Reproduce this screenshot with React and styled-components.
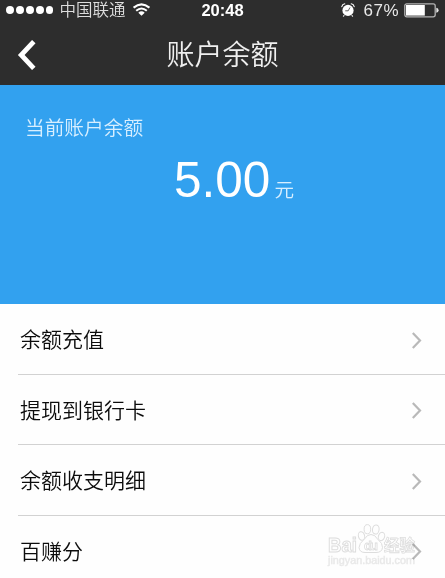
import React from "react";
import styled, { createGlobalStyle } from "styled-components";

const GlobalStyle = createGlobalStyle`
  * {
    box-sizing: border-box;
  }
  body {
    margin: 0;
    background: #fff;
    overflow: hidden;
    font-family: "Liberation Sans", "Noto Sans CJK SC", sans-serif;
  }
`;

const Screen = styled.main`
  position: relative;
  width: 445px;
  height: 578px;
  overflow: hidden;
  background: #fefefe;
`;

const Header = styled.header`
  height: 85px;
  background: #2d2d2d;
  color: #fff;
`;

const StatusBar = styled.div`
  display: grid;
  grid-template-columns: 1fr auto 1fr;
  align-items: center;
  height: 20px;
  padding: 0 6px;
`;

const StatusGroup = styled.div`
  display: flex;
  align-items: center;
  justify-content: ${(props) => props.$align || "flex-start"};
  height: 20px;
`;

const Signal = styled.div`
  display: flex;
  gap: 2px;
  margin-right: 6px;
`;

const Dot = styled.i`
  width: 7.9px;
  height: 7.9px;
  border-radius: 50%;
  background: #fff;
`;

const Carrier = styled.span`
  margin-right: 8px;
  font-size: 16.5px;
  font-weight: 350;
  line-height: 20px;
  color: #dedede;
`;

const Clock = styled.span`
  font-size: 16.5px;
  font-weight: 700;
  line-height: 20px;
`;

const Percent = styled.span`
  margin: 0 5px 0 8px;
  padding-top: 1px;
  font-size: 17px;
  line-height: 20px;
  letter-spacing: 0.5px;
  color: #e8e8e8;
`;

const TitleBar = styled.div`
  display: grid;
  grid-template-columns: 54px 1fr 54px;
  align-items: center;
  height: 65px;
`;

const BackButton = styled.button`
  display: flex;
  padding: 4px 0 0 17px;
  border: 0;
  background: none;
  color: #fff;
`;

const Title = styled.h1`
  margin: 0;
  padding-top: 7px;
  font-size: 28px;
  font-weight: 350;
  line-height: 40px;
  text-align: center;
  color: #efefef;
`;

const Balance = styled.section`
  height: 219px;
  padding: 29px 25px;
  background: #32a1ef;
  color: #fff;
`;

const BalanceLabel = styled.div`
  font-size: 19.7px;
  font-weight: 350;
  line-height: 28px;
  color: #d8efff;
`;

const Amount = styled.div`
  display: flex;
  align-items: baseline;
  justify-content: center;
  margin-top: 7px;
  padding-left: 23px;
  font-size: 49.5px;
  line-height: 62px;
`;

const Unit = styled.span`
  margin-left: 4px;
  font-size: 19.6px;
  font-weight: 350;
  line-height: 20px;
  color: #d8efff;
`;

const Menu = styled.ul`
  margin: 0;
  padding: 0 0 0 18px;
  list-style: none;
`;

const MenuItem = styled.li`
  display: flex;
  align-items: center;
  justify-content: space-between;
  height: 70.5px;
  padding: 3px 23.5px 0 2px;
  border-bottom: 1px solid #d2d2d2;
  font-size: 21px;
  font-weight: 350;
  line-height: 30px;
  color: #0c0c0c;
`;

// Multiplied so the row's chevron stays visible through it
const Watermark = styled.div`
  position: absolute;
  left: 326px;
  top: 523px;
  mix-blend-mode: multiply;
`;

const WifiIcon = () => (
  <svg width="17" height="14" viewBox="0 0 17 14" fill="none" stroke="#fff" strokeWidth="2.1">
    <path d="M.6 4.6Q8.5-2 16.4 4.6" />
    <path d="M3.2 7.8Q8.5 3.2 13.8 7.8" />
    <path d="M5.3 9.7Q8.5 7 11.7 9.7L8.5 12.8Z" fill="#fff" stroke="none" />
  </svg>
);

const AlarmIcon = () => (
  <svg width="14" height="15" viewBox="0 0 14 15" fill="none" stroke="#fff" strokeLinecap="round">
    <circle cx="7" cy="7.4" r="5.6" fill="#fff" stroke="none" />
    <path d="M.8 3.6Q1.3 1.3 3.8 .8M10.2 .8Q12.7 1.3 13.2 3.6" strokeWidth="1.1" />
    <path d="M3 12.6l-.6.6M11 12.6l.6.6" strokeWidth="1.1" />
    <path d="M8.8 4.8L7.2 7.8H4.6" stroke="#555" strokeWidth=".9" />
  </svg>
);

const BatteryIcon = () => (
  <svg width="35" height="15" viewBox="0 0 35 15">
    <rect x=".8" y=".8" width="30.4" height="13" rx="2" fill="none" stroke="#b5b5b5" strokeWidth="1.3" />
    <rect x="2" y="2" width="18.8" height="10.6" fill="#fff" />
    <path d="M32.3 4.8Q34.6 5 34.6 7.3T32.3 9.8Z" fill="#e6e6e6" />
  </svg>
);

const BackIcon = () => (
  <svg width="20" height="30" viewBox="0 0 20 30" fill="none" stroke="#fff" strokeWidth="4.8">
    <path d="M16.8 1.6L4.2 15L16.8 28.4" />
  </svg>
);

const Chevron = () => (
  <svg width="11" height="17" viewBox="0 0 11 17" fill="none" stroke="#b9b9b9" strokeWidth="2.2">
    <path d="M1.8 1L9 8.5L1.8 16" />
  </svg>
);

// Outlined logo, lettering included, laid over the last row
const WatermarkLogo = () => (
  <svg width="96" height="52" viewBox="0 0 96 52" fill="#fff" stroke="#dedede" strokeWidth="1">
    <ellipse cx="35.5" cy="13" rx="3.1" ry="4.3" transform="rotate(-15 35.5 13)" />
    <ellipse cx="41.4" cy="6.2" rx="3.3" ry="4.6" />
    <ellipse cx="49.8" cy="6.5" rx="3.3" ry="4.6" transform="rotate(8 49.8 6.5)" />
    <ellipse cx="55.5" cy="13.5" rx="3.1" ry="4.3" transform="rotate(18 55.5 13.5)" />
    <path d="M45 11.5Q49 11.5 51.5 16Q57 20.5 56.5 24.5Q56 29.5 50 29.5H39Q33.5 29.5 33 24.5Q33 20.5 38.5 16Q41 11.5 45 11.5Z" />
    <g fontFamily="Liberation Sans, Noto Sans CJK SC, sans-serif" fontWeight="700">
      <text x="2" y="28.5" fontSize="20" textLength="29" lengthAdjust="spacingAndGlyphs">
        Bai
      </text>
      <text x="38" y="26.5" fontSize="13" textLength="14" strokeWidth=".8">
        du
      </text>
      <text x="58" y="28" fontSize="15.5" strokeWidth=".8">
        经验
      </text>
      <text
        x="2"
        y="41"
        fontSize="10"
        fontWeight="400"
        textLength="87"
        lengthAdjust="spacingAndGlyphs"
        fill="#e6e6e6"
        stroke="#ececec"
        strokeWidth=".5"
      >
        jingyan.baidu.com
      </text>
    </g>
  </svg>
);

const items = ["余额充值", "提现到银行卡", "余额收支明细", "百赚分"];

const App = () => {
  return (
    <>
      <GlobalStyle />
      <Screen>
        <Header>
          <StatusBar>
            <StatusGroup>
              <Signal>
                {[1, 2, 3, 4, 5].map((n) => (
                  <Dot key={n} />
                ))}
              </Signal>
              <Carrier>中国联通</Carrier>
              <WifiIcon />
            </StatusGroup>
            <Clock>20:48</Clock>
            <StatusGroup $align="flex-end">
              <AlarmIcon />
              <Percent>67%</Percent>
              <BatteryIcon />
            </StatusGroup>
          </StatusBar>
          <TitleBar>
            <BackButton aria-label="返回">
              <BackIcon />
            </BackButton>
            <Title>账户余额</Title>
          </TitleBar>
        </Header>
        <Balance>
          <BalanceLabel>当前账户余额</BalanceLabel>
          <Amount>
            5.00
            <Unit>元</Unit>
          </Amount>
        </Balance>
        <Menu>
          {items.map((item) => (
            <MenuItem key={item}>
              {item}
              <Chevron />
            </MenuItem>
          ))}
        </Menu>
        <Watermark>
          <WatermarkLogo />
        </Watermark>
      </Screen>
    </>
  );
};

export default App;
